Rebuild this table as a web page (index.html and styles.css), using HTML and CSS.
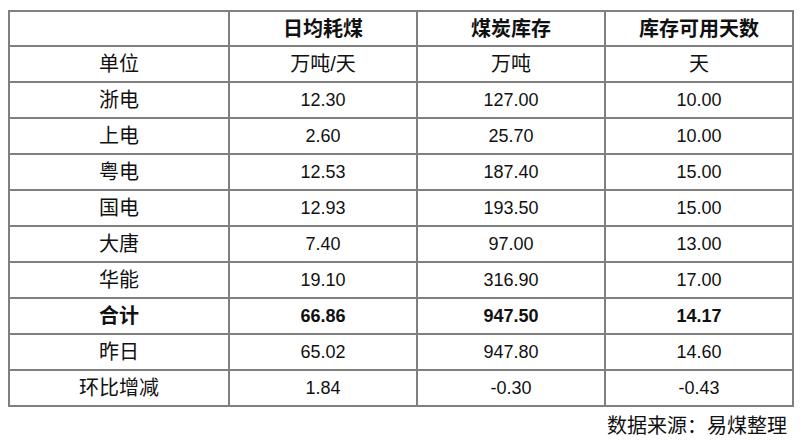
FILE: index.html
```html
<!DOCTYPE html>
<html lang="zh-CN">
<head>
<meta charset="utf-8">
<title>电厂煤炭库存</title>
<link rel="stylesheet" href="styles.css">
</head>
<body>
<div class="page">
<table class="coal">
<colgroup>
<col class="c1"><col class="c2"><col class="c3"><col class="c4">
</colgroup>
<thead>
<tr class="head"><th></th><th class="zh">日均耗煤</th><th class="zh">煤炭库存</th><th class="zh">库存可用天数</th></tr>
</thead>
<tbody>
<tr><td class="zh">单位</td><td class="zh">万吨/天</td><td class="zh">万吨</td><td class="zh">天</td></tr>
<tr><td class="zh">浙电</td><td>12.30</td><td>127.00</td><td>10.00</td></tr>
<tr><td class="zh">上电</td><td>2.60</td><td>25.70</td><td>10.00</td></tr>
<tr><td class="zh">粤电</td><td>12.53</td><td>187.40</td><td>15.00</td></tr>
<tr><td class="zh">国电</td><td>12.93</td><td>193.50</td><td>15.00</td></tr>
<tr><td class="zh">大唐</td><td>7.40</td><td>97.00</td><td>13.00</td></tr>
<tr><td class="zh">华能</td><td>19.10</td><td>316.90</td><td>17.00</td></tr>
<tr class="total"><td class="zh">合计</td><td>66.86</td><td>947.50</td><td>14.17</td></tr>
<tr><td class="zh">昨日</td><td>65.02</td><td>947.80</td><td>14.60</td></tr>
<tr><td class="zh">环比增减</td><td>1.84</td><td>-0.30</td><td>-0.43</td></tr>
</tbody>
</table>
<div class="source">数据来源：易煤整理</div>
</div>
</body>
</html>
```

FILE: styles.css
```css
html, body {
  margin: 0;
  padding: 0;
  background: #ffffff;
}
body {
  font-family: "Liberation Sans", "Noto Sans CJK SC", sans-serif;
  color: #111111;
}
.page {
  padding: 10px 0 0 8px;
  width: 786px;
}
.coal {
  border-collapse: separate;
  border-spacing: 0;
  table-layout: fixed;
  width: 786px;
  border-left: 2px solid #808080;
  border-top: 2px solid #808080;
}
.c1 { width: 220px; }
.c2, .c3, .c4 { width: 188px; }
.coal th, .coal td {
  border-right: 2px solid #808080;
  border-bottom: 2px solid #808080;
  padding: 0;
  text-align: center;
  vertical-align: middle;
  font-size: 18px;
  line-height: 24px;
  box-sizing: border-box;
  height: 36px;
}
.coal .zh {
  font-size: 20px;
}
.coal .head th {
  height: 35px;
  font-weight: bold;
}
.coal .total td {
  font-weight: bold;
}
.source {
  text-align: right;
  padding: 7px 7px 0 0;
  font-size: 20px;
  line-height: 24px;
}
```
